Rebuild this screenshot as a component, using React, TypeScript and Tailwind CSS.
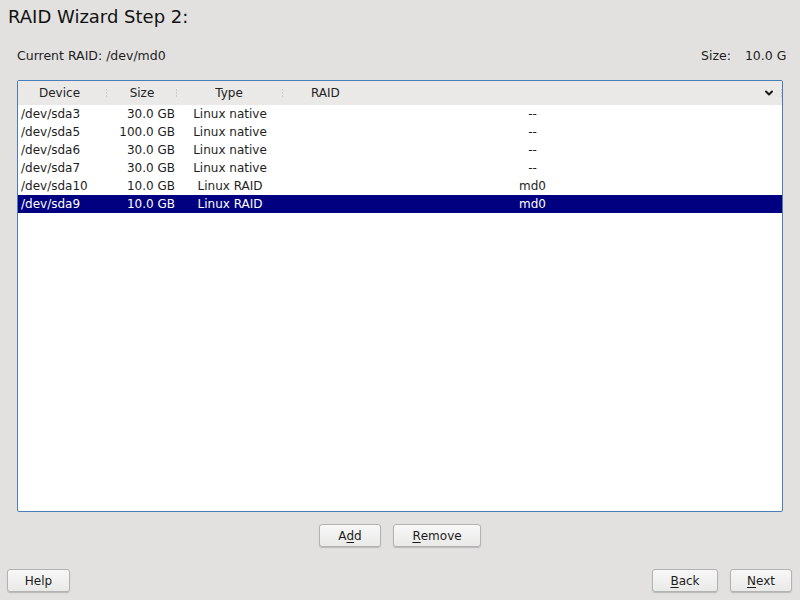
import { ChevronDown } from 'lucide-react';

interface Part {
  device: string;
  size: string;
  type: string;
  raid: string;
}

const parts: Part[] = [
  { device: '/dev/sda3', size: '30.0 GB', type: 'Linux native', raid: '--' },
  { device: '/dev/sda5', size: '100.0 GB', type: 'Linux native', raid: '--' },
  { device: '/dev/sda6', size: '30.0 GB', type: 'Linux native', raid: '--' },
  { device: '/dev/sda7', size: '30.0 GB', type: 'Linux native', raid: '--' },
  { device: '/dev/sda10', size: '10.0 GB', type: 'Linux RAID', raid: 'md0' },
  { device: '/dev/sda9', size: '10.0 GB', type: 'Linux RAID', raid: 'md0' },
];

function Grip() {
  return (
    <span className="absolute right-0 top-1/2 -translate-y-1/2 flex flex-col gap-[2px]">
      <span className="w-[1px] h-[1px] bg-[#b0b0b0]" />
      <span className="w-[1px] h-[1px] bg-[#b0b0b0]" />
      <span className="w-[1px] h-[1px] bg-[#b0b0b0]" />
    </span>
  );
}

function Btn({ children, w }: { children: React.ReactNode; w: string }) {
  return (
    <button
      className={`${w} h-[23px] flex items-center justify-center rounded-[3px] border border-[#b3b3b3] bg-gradient-to-b from-[#f8f8f8] to-[#e9e9e8] shadow-[0_1px_1px_rgba(0,0,0,0.18)] text-[12px] text-[#1c1c1c]`}
    >
      {children}
    </button>
  );
}

export default function App() {
  return (
    <div
      className="w-[800px] h-[600px] overflow-hidden bg-[#e2e1e0] flex flex-col text-[#1e1e1e]"
      style={{ fontFamily: '"DejaVu Sans", sans-serif' }}
    >
      <h1 className="pl-[8px] pt-[4px] text-[18px] leading-[26px] font-normal text-[#111]">RAID Wizard Step 2:</h1>

      <div className="mt-[18px] flex items-center text-[12.5px] leading-[16px]">
        <span className="pl-[17px]">Current RAID: /dev/md0</span>
        <div className="flex-1" />
        <div className="w-[85px] mr-[14px] shrink-0 flex gap-[14px] whitespace-nowrap overflow-hidden">
          <span>Size:</span>
          <span>10.0 GB</span>
        </div>
      </div>

      <div className="mt-[16px] mx-[17px] h-[432px] border border-[#4a7db8] rounded-[2px] bg-white flex flex-col overflow-hidden">
        <div className="h-[24px] bg-[#eae9e8] flex items-center text-[12px] text-[#222]">
          <div className="relative w-[89px] h-full flex items-center justify-center pr-[6px]">
            Device
            <Grip />
          </div>
          <div className="relative w-[70px] h-full flex items-center justify-center">
            Size
            <Grip />
          </div>
          <div className="relative w-[106px] h-full flex items-center justify-center pr-[2px]">
            Type
            <Grip />
          </div>
          <div className="relative flex-1 h-full flex items-center pl-[28px]">
            RAID
            <ChevronDown size={12} strokeWidth={4} className="absolute right-[7px] top-1/2 -translate-y-1/2 text-[#1a1a1a]" />
            <Grip />
          </div>
        </div>

        <div className="flex flex-col text-[12px]">
          {parts.map((p, i) => {
            const sel = i === parts.length - 1;
            return (
              <div
                key={p.device}
                className={`h-[18px] flex items-center ${sel ? 'bg-[#000080] text-white' : 'text-[#1e1e1e]'}`}
              >
                <div className="w-[89px] pl-[3px] whitespace-nowrap">{p.device}</div>
                <div className="w-[70px] pr-[2px] text-right whitespace-nowrap">{p.size}</div>
                <div className="w-[106px] text-center whitespace-nowrap">{p.type}</div>
                <div className="flex-1 text-center">{p.raid}</div>
              </div>
            );
          })}
        </div>
      </div>

      <div className="mt-[12px] flex justify-center gap-[12px]">
        <Btn w="w-[62px]">
          A<span className="underline underline-offset-2">d</span>d
        </Btn>
        <Btn w="w-[88px]">
          <span className="underline underline-offset-2">R</span>emove
        </Btn>
      </div>

      <div className="mt-[22px] px-[7px] pr-[8px] flex items-center">
        <Btn w="w-[63px]">Help</Btn>
        <div className="flex-1" />
        <div className="flex gap-[12px]">
          <Btn w="w-[66px]">
            <span className="underline underline-offset-2">B</span>ack
          </Btn>
          <Btn w="w-[62px]">
            <span className="underline underline-offset-2">N</span>ext
          </Btn>
        </div>
      </div>
    </div>
  );
}
